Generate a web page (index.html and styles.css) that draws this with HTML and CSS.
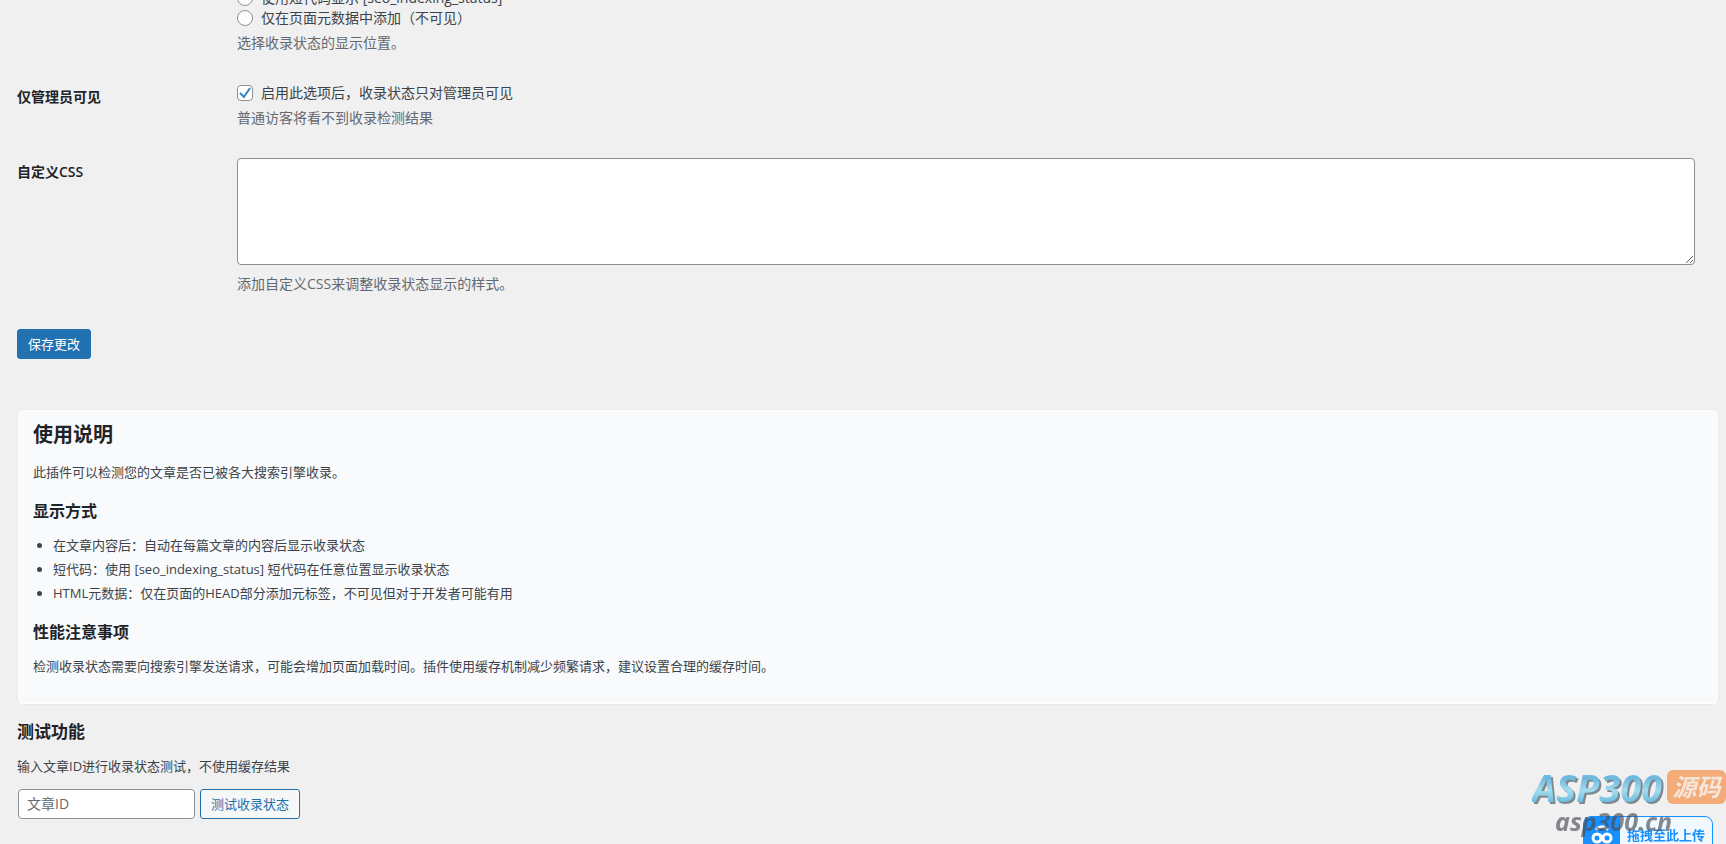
FILE: index.html
```html
<!DOCTYPE html>
<html lang="zh-CN">
<head>
  <meta charset="UTF-8" />
  <meta name="viewport" content="width=device-width, initial-scale=1.0"/>
  <title>收录状态设置</title>
  <link rel="stylesheet" href="styles.css">
</head>
<body>
  <div class="wrap">
    <form id="settings-form">
      <table class="form-table">
        <tr>
          <th scope="row"></th>
          <td>
            <div class="option">
              <input type="radio" id="display_shortcode" name="display" value="shortcode" />
              <label for="display_shortcode">使用短代码显示 [seo_indexing_status]</label>
            </div>
            <div class="option">
              <input type="radio" id="display_meta" name="display" value="meta" />
              <label for="display_meta">仅在页面元数据中添加（不可见）</label>
            </div>
            <p class="description">选择收录状态的显示位置。</p>
          </td>
        </tr>
        <tr>
          <th scope="row">仅管理员可见</th>
          <td>
            <div class="option">
              <input type="checkbox" id="admin_only" name="admin_only" checked />
              <label for="admin_only">启用此选项后，收录状态只对管理员可见</label>
            </div>
            <p class="description">普通访客将看不到收录检测结果</p>
          </td>
        </tr>
        <tr>
          <th scope="row"><label for="custom_css">自定义CSS</label></th>
          <td>
            <textarea id="custom_css" name="custom_css" rows="5"></textarea>
            <p class="description">添加自定义CSS来调整收录状态显示的样式。</p>
          </td>
        </tr>
      </table>
      <div class="submit">
        <button type="submit" class="button button-primary">保存更改</button>
      </div>
    </form>

    <div class="card">
      <h2>使用说明</h2>
      <p>此插件可以检测您的文章是否已被各大搜索引擎收录。</p>
      <h3>显示方式</h3>
      <ul>
        <li>在文章内容后：自动在每篇文章的内容后显示收录状态</li>
        <li>短代码：使用 [seo_indexing_status] 短代码在任意位置显示收录状态</li>
        <li>HTML元数据：仅在页面的HEAD部分添加元标签，不可见但对于开发者可能有用</li>
      </ul>
      <h3>性能注意事项</h3>
      <p>检测收录状态需要向搜索引擎发送请求，可能会增加页面加载时间。插件使用缓存机制减少频繁请求，建议设置合理的缓存时间。</p>
    </div>

    <div class="test-section">
      <h2>测试功能</h2>
      <p>输入文章ID进行收录状态测试，不使用缓存结果</p>
      <form class="test-form">
        <input type="text" id="post_id" name="post_id" placeholder="文章ID" aria-label="文章ID" />
        <button type="button" class="button">测试收录状态</button>
      </form>
    </div>
  </div>

  <button type="button" class="upload">
    <span class="upload-icon">
      <svg width="22" height="22" viewBox="0 0 22 22" fill="none" stroke="#fff" stroke-width="3" stroke-linecap="round">
        <circle cx="6" cy="14" r="4"/>
        <circle cx="16" cy="14" r="4"/>
        <path d="M6 5a6 5 0 0 1 10 0M9 11l4 6"/>
      </svg>
    </span>
    <span class="upload-text">拖拽至此上传</span>
  </button>

  <div class="watermark">
    <div class="brand">
      <span class="brand-name">ASP300</span>
      <span class="brand-tag">源码</span>
    </div>
    <div class="brand-url">asp300.cn</div>
  </div>
</body>
</html>
```
FILE: styles.css
```css
* {
  box-sizing: border-box;
}
body {
  margin: 0;
  height: 100vh;
  overflow: hidden;
  background: #f0f0f0;
  color: #3c434a;
  font-family: "Open Sans", "Noto Sans CJK SC", sans-serif;
  font-size: 13px;
  line-height: 20px;
}
/* the page is scrolled down to the end of the form */
.wrap {
  margin: -27px 7px 0 17px;
}
h2, h3 {
  color: #1d2327;
  font-weight: 600;
}
p {
  margin: 0;
}
.form-table {
  width: 100%;
  border-collapse: collapse;
  font-size: 14px;
}
.form-table th {
  width: 210px;
  padding: 20px 10px 20px 0;
  color: #1d2327;
  font-weight: 600;
  line-height: 18px;
  text-align: left;
  vertical-align: top;
}
.form-table td {
  padding: 15px 9px 15px 10px;
  vertical-align: top;
}
.option {
  display: flex;
  align-items: center;
  gap: 8px;
}
.description {
  margin-top: 5px;
  color: #646970;
}
input, textarea, button {
  font-family: inherit;
}
input[type="radio"], input[type="checkbox"] {
  appearance: none;
  width: 16px;
  height: 16px;
  margin: 0;
  border: 1px solid #8c8f94;
  border-radius: 4px;
  background: #fff;
}
input[type="radio"] {
  border-radius: 50%;
}
input[type="checkbox"]:checked {
  background: #fff url("data:image/svg+xml;utf8,<svg xmlns='http://www.w3.org/2000/svg' viewBox='0 0 14 14'><path d='M2 7l4 4 6-9' fill='none' stroke='%233582c4' stroke-width='2'/></svg>") center / 14px no-repeat;
}
textarea {
  display: block;
  width: 99%;
  height: 107px;
  padding: 2px 6px;
  border: 1px solid #8c8f94;
  border-radius: 4px;
  background: #fff;
  resize: vertical;
}
textarea + .description {
  margin-top: 9px;
}
.submit {
  padding: 20px 0 50px;
}
.button {
  height: 30px;
  padding: 0 10px 2px;
  border: 1px solid #2271b1;
  border-radius: 3px;
  background: #f6f7f7;
  color: #2271b1;
  font-size: 13px;
  cursor: pointer;
}
.button-primary {
  background: #2271b1;
  color: #fff;
}
.submit .button {
  display: block;
}
.card {
  padding: 11px 15px 28px;
  border: 1px solid #e8eaec;
  border-radius: 5px;
  background: #f8fafc;
  box-shadow: inset 0 0 0 1px #fff;
}
.card h2 {
  margin: 0 0 13px;
  font-size: 20px;
  line-height: 28px;
}
.card h3 {
  margin: 18px 0 13px;
  font-size: 16px;
  line-height: 22px;
}
.card ul {
  margin: 0;
  padding-left: 20px;
}
.card li {
  margin-bottom: 4px;
}
.test-section h2 {
  margin: 15px 0 12px;
  font-size: 17px;
  line-height: 24px;
}
.test-form {
  display: flex;
  gap: 5px;
  margin: 13px 0 0 1px;
}
.test-form input {
  width: 177px;
  height: 30px;
  padding: 0 8px 2px;
  border: 1px solid #8c8f94;
  border-radius: 4px;
  background: #fff;
  font-size: 14px;
}
.test-form input::placeholder {
  color: #646970;
}
.upload {
  position: fixed;
  right: 13px;
  bottom: -9px;
  display: flex;
  align-items: stretch;
  width: 130px;
  height: 37px;
  padding: 0;
  overflow: hidden;
  border: 1px solid #1890ff;
  border-radius: 8px;
  background: #f0f9ff;
  color: #1890ff;
  font-size: 13px;
  font-weight: 700;
}
.upload-icon {
  display: flex;
  align-items: center;
  justify-content: center;
  width: 36px;
  background: #1890ff;
}
.upload-text {
  flex: 1;
  line-height: 37px;
}
.watermark {
  position: fixed;
  right: 0;
  bottom: 6px;
  pointer-events: none;
  font-style: italic;
  font-weight: 700;
}
.brand {
  display: flex;
  align-items: center;
  gap: 5px;
}
.brand-name {
  background: linear-gradient(#6fb9de 25%, #a4dcee 60%, #62b8dc);
  background-clip: text;
  color: transparent;
  filter: drop-shadow(2px 2px 0 #7d8890);
  font-size: 38px;
  line-height: 34px;
}
.brand-tag {
  width: 59px;
  border-radius: 6px;
  background: #f3ac78;
  color: #f5e6dc;
  font-size: 24px;
  line-height: 34px;
  text-align: center;
}
.brand-url {
  padding-left: 23px;
  color: rgba(70, 75, 85, 0.65);
  font-size: 25px;
  line-height: 34px;
}
```
